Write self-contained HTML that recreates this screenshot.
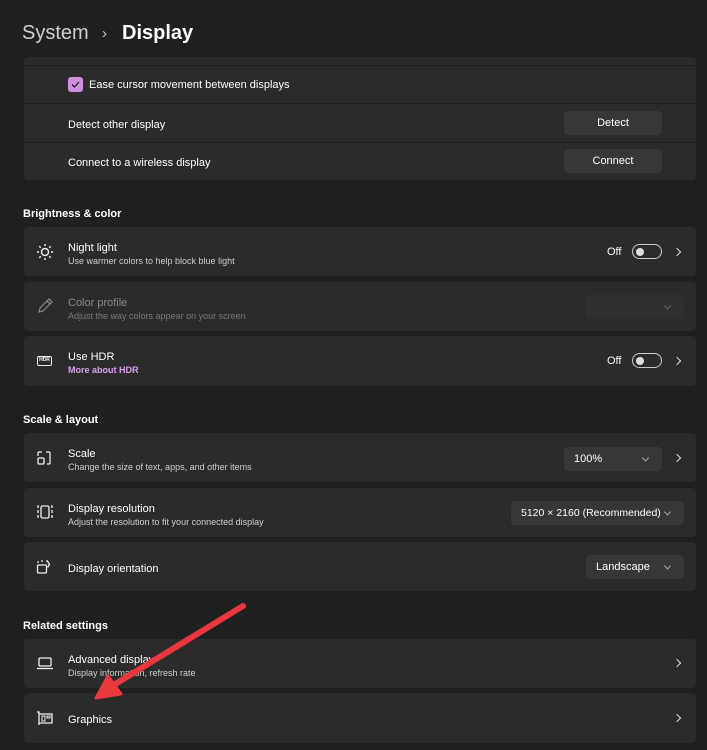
<!DOCTYPE html>
<html><head><meta charset="utf-8"><style>
*{margin:0;padding:0;box-sizing:border-box}
body{width:707px;height:750px;background:#202020;font-family:"Segoe UI","Liberation Sans",sans-serif;color:#fff;position:relative;overflow:hidden}
.a{position:absolute}
.card{position:absolute;left:24px;width:672px;background:#2b2b2b;border-radius:4px}
.t{position:absolute;left:68px;font-size:11px;color:#fff;margin-top:2px}
.s{position:absolute;left:68px;font-size:9px;color:#cfcfcf;margin-top:1px}
.h{position:absolute;left:23px;font-size:11px;font-weight:bold;color:#fff;margin-top:2px}
.btn{position:absolute;background:#373737;border-radius:4px;font-size:11px;text-align:center;color:#fff}
.dd{position:absolute;background:#373737;border-radius:4px;font-size:11px;color:#fff;padding-left:10px}
.dd i{position:absolute;right:14px;top:50%;width:5px;height:5px;border-right:1px solid #aaa;border-bottom:1px solid #aaa;transform:translateY(-70%) rotate(45deg)}
.chev{position:absolute;left:674px;width:6px;height:6px;border-right:1.4px solid #ddd;border-top:1.4px solid #ddd;transform:rotate(45deg)}
.tog{position:absolute;left:632px;width:30px;height:15px;border:1px solid #ccc;border-radius:8px}
.tog:after{content:"";position:absolute;left:3px;top:2.5px;width:8px;height:8px;border-radius:50%;background:#ddd}
.off{position:absolute;left:607px;font-size:11px;margin-top:2px}
.ic{position:absolute;left:36px}
</style></head><body>
<div class="a" style="left:22px;top:22px;font-size:20px;color:#cfcfcf">System</div>
<div class="a" style="left:102px;top:25px;font-size:15px;color:#ccc">›</div>
<div class="a" style="left:122px;top:22px;font-size:20px;font-weight:bold">Display</div>

<div class="card" style="top:57px;height:123px"></div>
<div class="a" style="left:24px;top:65px;width:672px;height:1px;background:#1f1f1f"></div>
<div class="a" style="left:24px;top:103px;width:672px;height:1px;background:#1f1f1f"></div>
<div class="a" style="left:24px;top:142px;width:672px;height:1px;background:#1f1f1f"></div>
<div class="a" style="left:68px;top:77px;width:15px;height:15px;background:#d08fdf;border-radius:3px"></div>
<svg class="a" style="left:68px;top:77px" width="15" height="15"><path d="M4 7.5l2.5 2.5 4.5-5" stroke="#222" stroke-width="1.3" fill="none"/></svg>
<div class="t" style="left:89px;top:77px">Ease cursor movement between displays</div>
<div class="t" style="top:117px">Detect other display</div>
<div class="btn" style="left:564px;top:111px;width:98px;height:24px;line-height:24px">Detect</div>
<div class="t" style="top:155px">Connect to a wireless display</div>
<div class="btn" style="left:564px;top:149px;width:98px;height:24px;line-height:24px">Connect</div>

<div class="h" style="top:206px">Brightness &amp; color</div>
<div class="card" style="top:227px;height:49px"></div>
<svg class="ic" style="top:243px" width="18" height="18"><circle cx="9" cy="9" r="3.5" stroke="#eee" stroke-width="1.4" fill="none"/><g stroke="#eee" stroke-width="1.4"><path d="M9 1v2M9 15v2M1 9h2M15 9h2M3.3 3.3l1.4 1.4M13.3 13.3l1.4 1.4M3.3 14.7l1.4-1.4M13.3 4.7l1.4-1.4"/></g></svg>
<div class="t" style="top:240px">Night light</div>
<div class="s" style="top:255px">Use warmer colors to help block blue light</div>
<div class="off" style="top:244px">Off</div><div class="tog" style="top:244px"></div><div class="chev" style="top:249px"></div>

<div class="card" style="top:282px;height:49px"></div>
<svg class="ic" style="top:297px" width="18" height="18"><path d="M3 15l1-4 7-7 3 3-7 7zM11 4l2-2 3 3-2 2" stroke="#888" stroke-width="1.2" fill="none"/></svg>
<div class="t" style="top:295px;color:#8a8a8a">Color profile</div>
<div class="s" style="top:310px;color:#777">Adjust the way colors appear on your screen</div>
<div class="dd" style="left:586px;top:295px;width:98px;height:24px;background:#303030"><i style="border-color:#666"></i></div>

<div class="card" style="top:336px;height:50px"></div>
<div class="a" style="left:37px;top:356px;width:15px;height:10px;border:1.3px solid #eee;border-radius:2px;font-size:5px;line-height:7px;text-align:center;font-weight:bold">HDR</div>
<div class="t" style="top:349px">Use HDR</div>
<div class="s" style="top:364px;color:#d9a1ec;font-weight:bold">More about HDR</div>
<div class="off" style="top:353px">Off</div><div class="tog" style="top:353px"></div><div class="chev" style="top:358px"></div>

<div class="h" style="top:412px">Scale &amp; layout</div>
<div class="card" style="top:433px;height:49px"></div>
<svg class="ic" style="top:450px" width="16" height="16"><path d="M2 6V3q0-1 1-1h3M10 2h3q1 0 1 1v10q0 1-1 1h-2" stroke="#eee" stroke-width="1.3" fill="none"/><rect x="2" y="8" width="6" height="6" rx="1" stroke="#eee" stroke-width="1.3" fill="none"/></svg>
<div class="t" style="top:446px">Scale</div>
<div class="s" style="top:461px">Change the size of text, apps, and other items</div>
<div class="dd" style="left:564px;top:447px;width:98px;height:24px;line-height:24px">100%<i></i></div>
<div class="chev" style="top:455px"></div>

<div class="card" style="top:488px;height:49px"></div>
<svg class="ic" style="top:504px" width="18" height="16"><path d="M3 2H2v12h1M15 2h1v12h-1" stroke="#eee" stroke-width="1.3" fill="none" stroke-dasharray="3 2"/><rect x="5" y="2" width="8" height="12" rx="1.5" stroke="#eee" stroke-width="1.3" fill="none"/></svg>
<div class="t" style="top:501px">Display resolution</div>
<div class="s" style="top:516px">Adjust the resolution to fit your connected display</div>
<div class="dd" style="left:511px;top:501px;width:173px;height:24px;line-height:24px;font-size:10.5px">5120 × 2160 (Recommended)<i></i></div>

<div class="card" style="top:542px;height:49px"></div>
<svg class="ic" style="top:559px" width="18" height="16"><rect x="1.5" y="6" width="9" height="8" rx="1" stroke="#eee" stroke-width="1.3" fill="none"/><path d="M2 4V2M5 2h2M10 2h1.5l2 3.5-2 3" stroke="#eee" stroke-width="1.3" fill="none"/></svg>
<div class="t" style="top:561px">Display orientation</div>
<div class="dd" style="left:586px;top:555px;width:98px;height:24px;line-height:24px">Landscape<i></i></div>

<div class="h" style="top:618px">Related settings</div>
<div class="card" style="top:639px;height:49px"></div>
<svg class="ic" style="top:656px" width="18" height="14"><rect x="3" y="2" width="12" height="8" rx="1" stroke="#eee" stroke-width="1.3" fill="none"/><path d="M1 12.5h16" stroke="#eee" stroke-width="1.3"/></svg>
<div class="t" style="top:652px">Advanced display</div>
<div class="s" style="top:667px">Display information, refresh rate</div>
<div class="chev" style="top:660px"></div>

<div class="card" style="top:693px;height:50px"></div>
<svg class="ic" style="top:710px" width="18" height="16"><path d="M1 2h2v13M3 4h13v9H3" stroke="#eee" stroke-width="1.3" fill="none"/><rect x="6" y="6" width="3" height="5" stroke="#eee" fill="none"/><rect x="11" y="6" width="3" height="2" stroke="#eee" fill="none"/></svg>
<div class="t" style="top:712px">Graphics</div>
<div class="chev" style="top:715px"></div>

<svg class="a" style="left:0;top:0" width="707" height="750"><path d="M243 606L112 686" stroke="#e8383d" stroke-width="6" stroke-linecap="round"/><path d="M96 698L108 676L121 694Z" fill="#e8383d" stroke="#e8383d" stroke-width="3" stroke-linejoin="round"/></svg>
</body></html>
